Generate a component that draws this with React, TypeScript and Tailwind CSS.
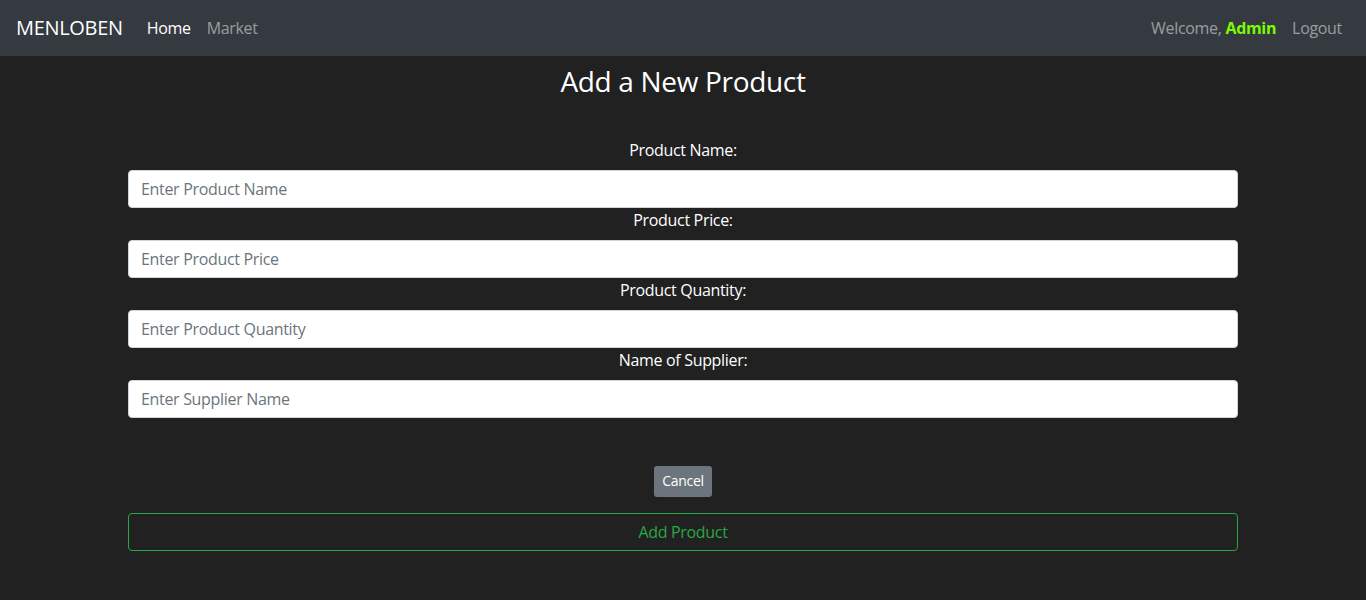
import React from 'react';

const fields = [
  { label: 'Product Name:', placeholder: 'Enter Product Name' },
  { label: 'Product Price:', placeholder: 'Enter Product Price' },
  { label: 'Product Quantity:', placeholder: 'Enter Product Quantity' },
  { label: 'Name of Supplier:', placeholder: 'Enter Supplier Name' },
];

const App: React.FC = () => {
  return (
    <div
      className="min-h-[600px] bg-[#212121] text-white tracking-[-0.02em]"
      style={{ fontFamily: '"Open Sans", "Noto Sans", Arial, sans-serif' }}
    >
      <nav className="h-14 bg-[#343a40] flex items-center justify-between px-4">
        <div className="flex items-center">
          <span className="text-xl text-white mr-4">MENLOBEN</span>
          <a href="#" className="text-white px-2">Home</a>
          <a href="#" className="text-white/50 px-2">Market</a>
        </div>
        <div className="flex items-center">
          <span className="text-white/50 px-2">
            Welcome, <span className="font-bold text-[#7cfc00]">Admin</span>
          </span>
          <a href="#" className="text-white/50 px-2">Logout</a>
        </div>
      </nav>

      <div className="max-w-[1140px] mx-auto px-[15px]">
        <h3 className="text-[28px] leading-[1.2] text-center mt-[9px] mb-2">Add a New Product</h3>

        <form className="mt-[39px]">
          {fields.map((f) => (
            <div key={f.label} className="flex flex-col">
              <label className="text-center leading-6 mb-2">{f.label}</label>
              <input
                type="text"
                placeholder={f.placeholder}
                className="h-[38px] w-full bg-white rounded border border-[#ced4da] px-3 text-[#495057] placeholder:text-[#6c757d] outline-none"
              />
            </div>
          ))}

          <div className="flex justify-center mt-12">
            <button
              type="button"
              className="bg-[#6c757d] text-white text-sm h-[31px] px-2 rounded-[3px]"
            >
              Cancel
            </button>
          </div>

          <button
            type="submit"
            className="mt-4 w-full h-[38px] rounded border border-[#28a745] text-[#28a745]"
          >
            Add Product
          </button>
        </form>
      </div>
    </div>
  );
};

export default App;
